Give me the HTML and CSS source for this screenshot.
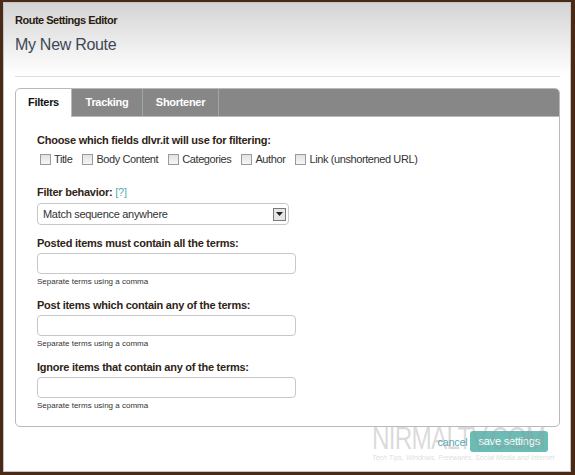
FILE: index.html
```html
<!DOCTYPE html>
<html>
<head>
<meta charset="utf-8">
<link rel="stylesheet" href="styles.css">
</head>
<body>
<div class="dialog">
  <div class="head">
    <div class="caption">Route Settings Editor</div>
    <div class="title">My New Route</div>
  </div>
  <div class="rule"></div>
  <div class="panel">
    <div class="tabs">
      <div class="tab tab-filters active">Filters</div>
      <div class="tab tab-tracking">Tracking</div>
      <div class="tab tab-shortener">Shortener</div>
    </div>
    <div class="body">
      <div class="label">Choose which fields dlvr.it will use for filtering:</div>
      <div class="checks">
        <label class="check"><span class="box"></span>Title</label>
        <label class="check"><span class="box"></span>Body Content</label>
        <label class="check"><span class="box"></span>Categories</label>
        <label class="check"><span class="box"></span>Author</label>
        <label class="check"><span class="box"></span>Link (unshortened URL)</label>
      </div>
      <div class="label l2">Filter behavior: <span class="help">[?]</span></div>
      <div class="select"><span>Match sequence anywhere</span><span class="arrow"><svg width="7" height="4" viewBox="0 0 7 4"><path d="M0 0h7L3.5 4z" fill="#222"/></svg></span></div>
      <div class="label l3">Posted items must contain all the terms:</div>
      <div class="input"></div>
      <div class="hint">Separate terms using a comma</div>
      <div class="label l4">Post items which contain any of the terms:</div>
      <div class="input"></div>
      <div class="hint">Separate terms using a comma</div>
      <div class="label l4">Ignore items that contain any of the terms:</div>
      <div class="input"></div>
      <div class="hint">Separate terms using a comma</div>
    </div>
  </div>
  <div class="footer">
    <a class="cancel">cancel</a>
    <span class="save">save settings</span>
  </div>
  <div class="watermark">
    <div class="wm-big">NIRMALTV.COM</div>
    <div class="wm-small">Tech Tips, Windows, Freewares, Social Media and Internet</div>
  </div>
</div>
</body>
</html>
```
FILE: styles.css
```css
html, body {
  margin: 0;
  padding: 0;
}
body {
  background: #4a2a16;
  width: 575px;
  height: 475px;
  overflow: hidden;
  font-family: "Liberation Sans", Arial, sans-serif;
}
.dialog {
  position: relative;
  margin: 2px 4px 0 3px;
  height: 468px;
  border: 1px solid #c4c4c4;
  background: linear-gradient(#d4d4d4 0px, #f2f2f2 50px, #ffffff 72px);
  padding: 0 10px 0 11px;
  overflow: hidden;
}
.head {
  padding-top: 10px;
}
.caption {
  font-size: 11px;
  font-weight: bold;
  color: #2a1a10;
  line-height: 14px;
  letter-spacing: -0.5px;
}
.title {
  font-size: 16px;
  color: #3d4856;
  line-height: 20px;
  margin-top: 8px;
  letter-spacing: -0.3px;
}
.rule {
  margin-top: 21px;
  height: 1px;
  background: #dedede;
}
.panel {
  margin-top: 11px;
  border: 1px solid #b9b9b9;
  border-radius: 5px;
  height: 337px;
  overflow: hidden;
}
.tabs {
  display: flex;
  background: #878787;
  height: 27px;
  border-bottom: 1px solid #b9b9b9;
}
.tab {
  font-size: 11px;
  font-weight: bold;
  color: #ffffff;
  line-height: 27px;
  text-align: center;
  border-right: 1px solid #a3a3a3;
  letter-spacing: -0.3px;
}
.tab-filters { width: 55px; }
.tab-tracking { width: 70px; }
.tab-shortener { width: 75px; }
.tab.active {
  background: #ffffff;
  color: #111;
  height: 28px;
  border-right: 1px solid #b9b9b9;
}
.body {
  padding: 16px 0 0 21px;
}
.label {
  font-size: 11px;
  font-weight: bold;
  color: #2f2416;
  line-height: 14px;
  letter-spacing: -0.25px;
}
.checks {
  display: flex;
  gap: 10px;
  margin-top: 5px;
  margin-left: 3px;
}
.check {
  display: flex;
  align-items: center;
  gap: 3px;
  font-size: 11px;
  color: #333;
  line-height: 14px;
  letter-spacing: -0.4px;
}
.box {
  width: 9px;
  height: 9px;
  border: 1px solid #9a9a9a;
  background: linear-gradient(#e2e2e2, #f6f6f6);
}
.l2 { margin-top: 19px; }
.l3 { margin-top: 11px; }
.l4 { margin-top: 11px; }
.help {
  color: #5aaab4;
  font-weight: normal;
}
.select {
  margin-top: 4px;
  width: 243px;
  height: 20px;
  border: 1px solid #c8c8c8;
  border-radius: 4px;
  display: flex;
  align-items: center;
  justify-content: space-between;
  font-size: 11px;
  color: #333;
  padding-left: 5px;
  padding-right: 2px;
  letter-spacing: -0.3px;
}
.arrow {
  width: 11px;
  height: 11px;
  border: 1px solid #7a7a7a;
  background: #e6e6e6;
  display: flex;
  align-items: center;
  justify-content: center;
}
.input {
  margin-top: 3px;
  width: 257px;
  height: 19px;
  border: 1px solid #c8c8c8;
  border-radius: 4px;
}
.hint {
  font-size: 8px;
  color: #333;
  margin-top: 2px;
  line-height: 11px;
}
.footer {
  display: flex;
  justify-content: flex-end;
  align-items: center;
  gap: 3px;
  margin-top: 4px;
  padding-right: 12px;
}
.cancel {
  font-size: 11px;
  color: #5aaab4;
  letter-spacing: -0.3px;
}
.save {
  background: #6bbcb5;
  color: #ffffff;
  font-size: 11px;
  border-radius: 3px;
  padding: 0 8px;
  line-height: 21px;
  letter-spacing: -0.2px;
}
.watermark {
  position: absolute;
  left: 368px;
  top: 420px;
  width: 200px;
  pointer-events: none;
  color: rgba(150, 150, 150, 0.35);
}
.wm-big {
  font-size: 32px;
  line-height: 30px;
  letter-spacing: -1px;
  transform: scaleX(0.76);
  transform-origin: left top;
  white-space: nowrap;
}
.wm-small {
  font-size: 7px;
  font-style: italic;
  line-height: 9px;
  white-space: nowrap;
  margin-left: 0px;
}
```
